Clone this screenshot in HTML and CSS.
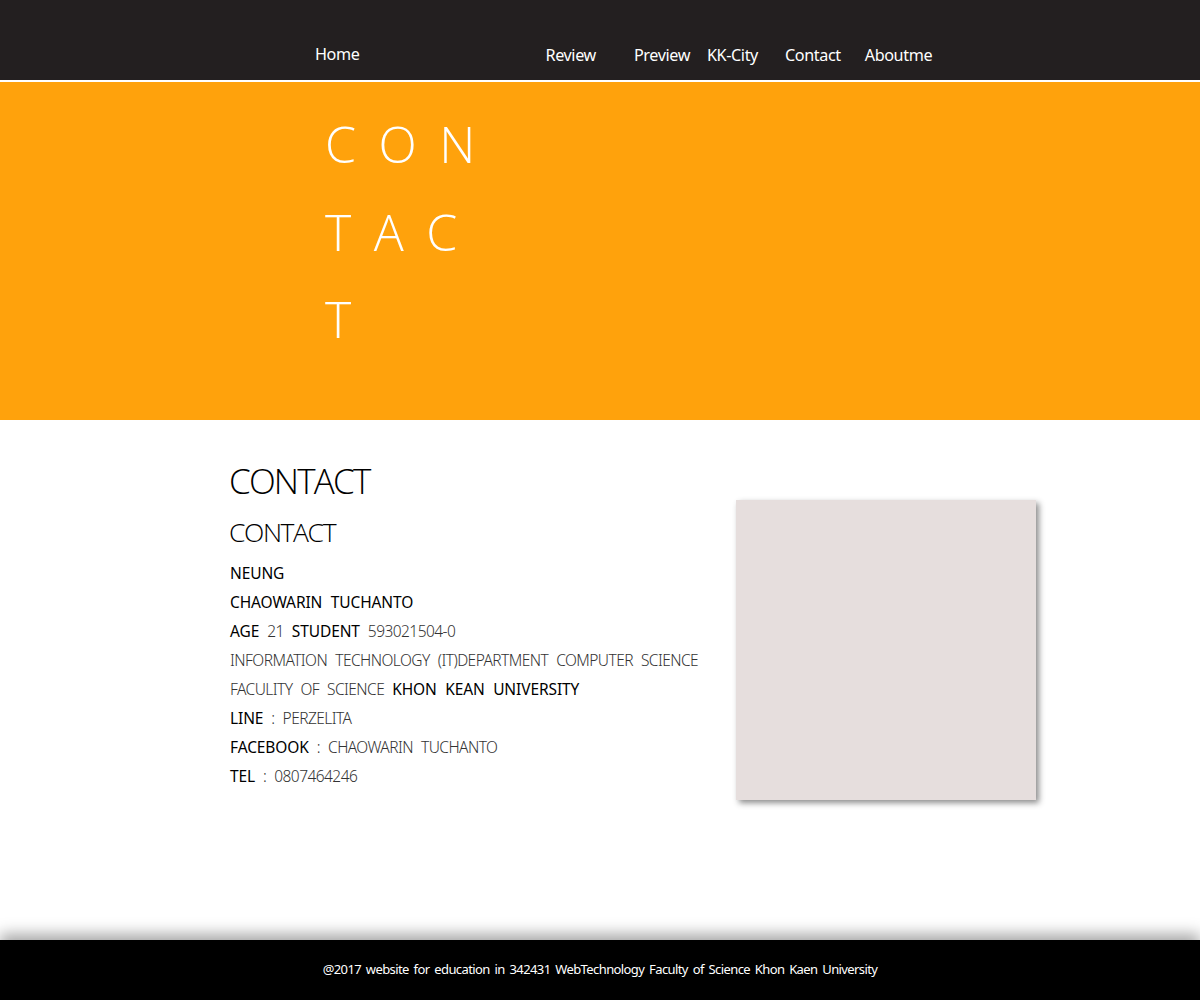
FILE: index.html
```html
<!DOCTYPE html>
<html lang="en">
<head>
<meta charset="utf-8">
<title>Contact</title>
<link rel="stylesheet" href="styles.css">
</head>
<body>
<header class="topbar">
  <nav class="nav">
    <a class="nav-link nav-home" href="#">Home</a>
    <a class="nav-link nav-review" href="#">Review</a>
    <a class="nav-link nav-preview" href="#">Preview</a>
    <a class="nav-link nav-city" href="#">KK-City</a>
    <a class="nav-link nav-contact" href="#">Contact</a>
    <a class="nav-link nav-about" href="#">Aboutme</a>
  </nav>
</header>
<section class="hero">
  <div class="hero-title">CONTACT</div>
</section>
<main class="content">
  <div class="info">
    <h1 class="title">CONTACT</h1>
    <h2 class="subtitle">CONTACT</h2>
    <p class="line"><b>NEUNG</b></p>
    <p class="line"><b>CHAOWARIN TUCHANTO</b></p>
    <p class="line"><b>AGE</b> 21 <b>STUDENT</b> 593021504-0</p>
    <p class="line">INFORMATION TECHNOLOGY (IT)DEPARTMENT COMPUTER SCIENCE</p>
    <p class="line">FACULITY OF SCIENCE <b>KHON KEAN UNIVERSITY</b></p>
    <p class="line"><b>LINE</b> : PERZELITA</p>
    <p class="line"><b>FACEBOOK</b> : CHAOWARIN TUCHANTO</p>
    <p class="line"><b>TEL</b> : 0807464246</p>
  </div>
  <div class="photo"></div>
</main>
<footer class="footer">@2017 website for education in 342431 WebTechnology Faculty of Science Khon Kaen University</footer>
</body>
</html>
```
FILE: styles.css
```css
* { box-sizing: border-box; }
html, body { margin: 0; padding: 0; }
body {
  background: #ffffff;
  font-family: "Open Sans", "Noto Sans", sans-serif;
  color: #000;
  width: 1200px;
  height: 1000px;
  overflow: hidden;
  position: relative;
}
.topbar {
  background: #231f20;
  height: 82px;
  border-bottom: 2px solid #ffffff;
}
.nav {
  display: flex;
  align-items: baseline;
  padding: 44px 0 0 315px;
}
.nav-link {
  color: #ffffff;
  text-decoration: none;
  font-family: "Noto Sans", sans-serif;
  font-size: 16.2px;
  letter-spacing: -0.4px;
  line-height: 22px;
}
.nav-home { position: relative; top: -1px; }
.nav-review { margin-left: 186px; }
.nav-preview { margin-left: 38px; }
.nav-city { margin-left: 17px; }
.nav-contact { margin-left: 27px; }
.nav-about { margin-left: 24px; }

.hero {
  background: #ffa20c;
  height: 338px;
  padding: 19px 0 0 325px;
}
.hero-title {
  width: 200px;
  color: #ffffff;
  font-family: "Open Sans", sans-serif;
  font-weight: 300;
  font-size: 50px;
  letter-spacing: 22.5px;
  line-height: 87.5px;
  word-break: break-all;
}
.content {
  display: flex;
  padding: 39px 0 0 229px;
  height: 520px;
}
.info { width: 507px; }
.title {
  margin: 0;
  font-family: "Open Sans", sans-serif;
  font-weight: 300;
  font-size: 35px;
  letter-spacing: -1.8px;
  line-height: 44px;
}
.subtitle {
  margin: 9px 0 7px;
  font-family: "Open Sans", sans-serif;
  font-weight: 300;
  font-size: 26.5px;
  letter-spacing: -1.4px;
  line-height: 40px;
}
.line {
  margin: 0 0 0 1px;
  font-family: "Noto Sans", sans-serif;
  font-weight: 300;
  font-size: 15.5px;
  line-height: 29px;
  letter-spacing: -0.55px;
  word-spacing: 4.5px;
  color: #333;
  white-space: nowrap;
}
.line b {
  font-weight: 400;
  color: #000;
  letter-spacing: -0.1px;
}
.photo {
  width: 300px;
  height: 300px;
  margin-top: 41px;
  background: #e6dedd;
  box-shadow: 3px 3px 6px rgba(0, 0, 0, 0.45);
}
.footer {
  position: absolute;
  left: 0;
  bottom: 0;
  width: 1200px;
  height: 60px;
  background: #000;
  color: #fff;
  font-family: "Noto Sans", sans-serif;
  font-size: 13px;
  letter-spacing: -0.6px;
  word-spacing: 2px;
  text-align: center;
  line-height: 58px;
  box-shadow: 0 -6px 14px rgba(0, 0, 0, 0.35);
}
```
